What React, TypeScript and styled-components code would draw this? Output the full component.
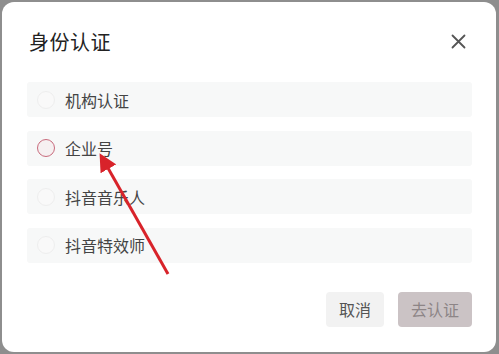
import { FC } from 'react';
import styled, { createGlobalStyle } from 'styled-components';

const GlobalStyle = createGlobalStyle`
  html, body {
    margin: 0;
    padding: 0;
    background: #8e8e8e;
    font-family: "Noto Sans CJK SC", "Noto Sans", sans-serif;
  }
  * { box-sizing: border-box; }
`;

type Option = { label: string; active?: boolean };

const options: Option[] = [
  { label: '机构认证' },
  { label: '企业号', active: true },
  { label: '抖音音乐人' },
  { label: '抖音特效师' },
];

const CloseIcon: FC = () => (
  <svg width="15" height="15" viewBox="0 0 15 15">
    <path d="M1.5 1.5 L13.5 13.5 M13.5 1.5 L1.5 13.5" stroke="#555" strokeWidth="1.8" strokeLinecap="round" />
  </svg>
);

export default function App() {
  return (
    <>
      <GlobalStyle />
      <SPage>
        <SModal>
          <SHeader>
            <STitle>身份认证</STitle>
            <SClose>
              <CloseIcon />
            </SClose>
          </SHeader>
          <SList>
            {options.map((o) => (
              <SRow key={o.label}>
                <SRadio $active={!!o.active} />
                <SLabel>{o.label}</SLabel>
              </SRow>
            ))}
          </SList>
          <SFooter>
            <SButton>取消</SButton>
            <SButton $primary>去认证</SButton>
          </SFooter>
          <SArrow width="80" height="130" viewBox="0 0 80 130">
            <defs>
              <marker id="head" markerWidth="6" markerHeight="6" refX="3" refY="3" orient="auto">
                <path d="M0 0 L6 3 L0 6 Z" fill="#d8232a" />
              </marker>
            </defs>
            <line x1="76" y1="128" x2="12" y2="15" stroke="#d8232a" strokeWidth="3" markerEnd="url(#head)" />
          </SArrow>
        </SModal>
      </SPage>
    </>
  );
}

const SPage = styled.div`
  width: 499px;
  height: 354px;
  padding: 2px 3px 2px 2px;
`;

const SModal = styled.div`
  position: relative;
  height: 100%;
  background: #fff;
  border-radius: 12px;
  padding: 0 24px 0 25px;
  display: flex;
  flex-direction: column;
`;

const SHeader = styled.div`
  display: flex;
  align-items: center;
  justify-content: space-between;
  height: 80px;
  padding-left: 2px;
  padding-bottom: 1px;
`;

const STitle = styled.h1`
  margin: 0;
  font-size: 20px;
  font-weight: 400;
  color: #222;
  letter-spacing: 0.5px;
`;

const SClose = styled.div`
  display: flex;
  margin-right: 6px;
`;

const SList = styled.div`
  display: flex;
  flex-direction: column;
  gap: 13.5px;
`;

const SRow = styled.div`
  display: flex;
  align-items: center;
  height: 35px;
  background: #f7f8f8;
  border-radius: 3px;
  padding-left: 10px;
`;

const SRadio = styled.span<{ $active: boolean }>`
  width: 18px;
  height: 18px;
  border-radius: 50%;
  border: 1px solid ${(p) => (p.$active ? '#c86a7c' : '#eeeeee')};
  background: ${(p) => (p.$active ? '#f6f0f1' : '#f9f9f9')};
  margin-right: 10px;
`;

const SLabel = styled.span`
  font-size: 16px;
  color: #444;
`;

const SFooter = styled.div`
  display: flex;
  justify-content: flex-end;
  gap: 14px;
  margin-top: 29px;
`;

const SButton = styled.button<{ $primary?: boolean }>`
  height: 35px;
  padding: 0 13px;
  border: none;
  border-radius: 4px;
  font-family: inherit;
  font-size: 16px;
  background: ${(p) => (p.$primary ? '#cbc3c5' : '#f2f2f2')};
  color: ${(p) => (p.$primary ? '#8d8587' : '#555')};
`;

const SArrow = styled.svg`
  position: absolute;
  left: 90px;
  top: 144px;
  overflow: visible;
`;
